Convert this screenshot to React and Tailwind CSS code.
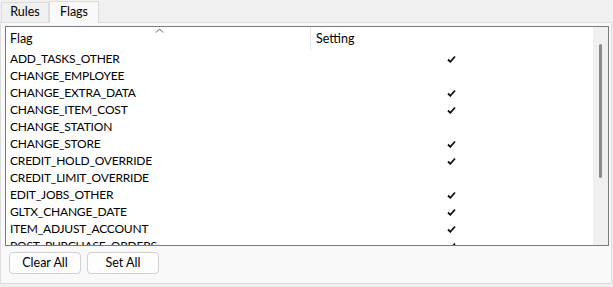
import React from 'react';

const flags = [
  ['ADD_TASKS_OTHER', true],
  ['CHANGE_EMPLOYEE', false],
  ['CHANGE_EXTRA_DATA', true],
  ['CHANGE_ITEM_COST', true],
  ['CHANGE_STATION', false],
  ['CHANGE_STORE', true],
  ['CREDIT_HOLD_OVERRIDE', true],
  ['CREDIT_LIMIT_OVERRIDE', false],
  ['EDIT_JOBS_OTHER', true],
  ['GLTX_CHANGE_DATE', true],
  ['ITEM_ADJUST_ACCOUNT', true],
  ['POST_PURCHASE_ORDERS', true],
];

function Check() {
  return (
    <svg width="9" height="8" viewBox="0 0 9 8" className="block">
      <path d="M1 4.5 L3.3 6.8 L8 1.5" fill="none" stroke="#111" strokeWidth="1.8" />
    </svg>
  );
}

export default function App() {
  return (
    <div className="w-[613px] h-[287px] bg-[#f0f0f0] text-[12.5px] text-black overflow-hidden" style={{ fontFamily: 'Lato, "Noto Sans", sans-serif' }}>
      {/* tabs */}
      <div className="flex h-[22px] items-end pl-px">
        <div className="h-[20px] w-[48px] border border-b-0 border-[#dcdcdc] bg-[#f0f0f0] flex items-center justify-center">Rules</div>
        <div className="h-[22px] w-[50px] border border-b-0 border-[#dcdcdc] bg-[#f9f9f9] flex items-center justify-center -mb-px relative z-10">Flags</div>
      </div>

      {/* panel */}
      <div className="h-[262px] w-[612px] border border-[#dcdcdc] bg-[#f9f9f9] px-[4px] pt-[3px]">
        <div className="h-[220px] w-[604px] border border-[#7a7a80] bg-white flex overflow-hidden">
          <div className="flex-1 overflow-hidden">
            {/* header */}
            <div className="flex h-[23px] relative">
              <div className="w-[305px] pl-[4px] pt-[3px] border-r border-[#e5e5e5] relative">
                Flag
                <svg width="9" height="5" viewBox="0 0 9 5" className="absolute left-[149px] top-[1px]">
                  <path d="M1 4.5 L4.5 1 L8 4.5" fill="none" stroke="#555" strokeWidth="1" />
                </svg>
              </div>
              <div className="pl-[5px] pt-[3px]">Setting</div>
            </div>
            {/* rows */}
            {flags.map(([name, on]) => (
              <div key={name} className="flex h-[17px] items-center">
                <div className="w-[306px] pl-[4px] leading-[17px] whitespace-nowrap text-[12px] tracking-[-0.2px]">{name}</div>
                <div className="w-[280px] flex justify-center pr-[2px]">{on && <Check />}</div>
              </div>
            ))}
          </div>
          {/* scrollbar */}
          <div className="w-[15px] bg-[#f0f0f0] flex justify-center pt-[17px]">
            <div className="w-[3px] h-[134px] bg-[#8a8a8a] rounded-full" />
          </div>
        </div>

        {/* buttons */}
        <div className="flex gap-[6px] pt-[6px] pl-[4px]">
          <button className="h-[22px] w-[72px] rounded-[4px] border border-[#d0d0d0] bg-[#fdfdfd]">Clear All</button>
          <button className="h-[22px] w-[72px] rounded-[4px] border border-[#d0d0d0] bg-[#fdfdfd]">Set All</button>
        </div>
      </div>
    </div>
  );
}
